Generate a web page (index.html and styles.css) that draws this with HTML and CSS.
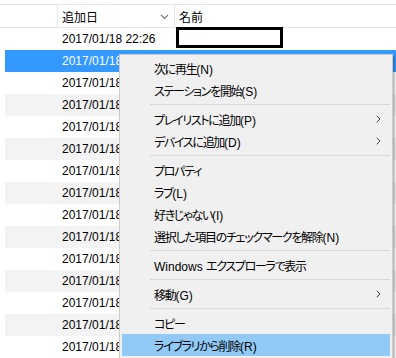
FILE: index.html
```html
<!DOCTYPE html>
<html lang="ja">
<head>
<meta charset="utf-8">
<link rel="stylesheet" href="styles.css">
</head>
<body>
<div class="page">
  <div class="list">
    <div class="header">
      <div class="hcell hgap"></div>
      <div class="hcell hdate">
        <span>追加日</span>
        <svg class="sort" width="9" height="6" viewBox="0 0 9 6"><path d="M1 1 L4.5 4.5 L8 1" fill="none" stroke="#777" stroke-width="1.1"/></svg>
      </div>
      <div class="hcell hname">名前</div>
    </div>
    <div class="row"><div class="date">2017/01/18 22:26</div><div class="name"><div class="redact"></div></div></div>
    <div class="row sel"><div class="date">2017/01/18 22:26</div><div class="name"></div></div>
    <div class="row"><div class="date">2017/01/18 22:26</div><div class="name"></div></div>
    <div class="row alt"><div class="date">2017/01/18 22:26</div><div class="name"></div></div>
    <div class="row"><div class="date">2017/01/18 22:26</div><div class="name"></div></div>
    <div class="row alt"><div class="date">2017/01/18 22:26</div><div class="name"></div></div>
    <div class="row"><div class="date">2017/01/18 22:26</div><div class="name"></div></div>
    <div class="row alt"><div class="date">2017/01/18 22:26</div><div class="name"></div></div>
    <div class="row"><div class="date">2017/01/18 22:26</div><div class="name"></div></div>
    <div class="row alt"><div class="date">2017/01/18 22:26</div><div class="name"></div></div>
    <div class="row"><div class="date">2017/01/18 22:26</div><div class="name"></div></div>
    <div class="row alt"><div class="date">2017/01/18 22:26</div><div class="name"></div></div>
    <div class="row"><div class="date">2017/01/18 22:26</div><div class="name"></div></div>
    <div class="row alt"><div class="date">2017/01/18 22:26</div><div class="name"></div></div>
    <div class="row"><div class="date">2017/01/18 22:26</div><div class="name"></div></div>
  </div>

  <div class="menu">
    <div class="item"><span class="label">次に再生<span class="acc">(N)</span></span></div>
    <div class="item"><span class="label">ステーションを開始<span class="acc">(S)</span></span></div>
    <div class="sep"></div>
    <div class="item"><span class="label">プレイリストに追加<span class="acc">(P)</span></span><svg class="chev" width="5" height="8" viewBox="0 0 5 8"><path d="M0.7 0.7 L4 4 L0.7 7.3" fill="none" stroke="#444" stroke-width="1"/></svg></div>
    <div class="item"><span class="label">デバイスに追加<span class="acc">(D)</span></span><svg class="chev" width="5" height="8" viewBox="0 0 5 8"><path d="M0.7 0.7 L4 4 L0.7 7.3" fill="none" stroke="#444" stroke-width="1"/></svg></div>
    <div class="sep"></div>
    <div class="item"><span class="label">プロパティ</span></div>
    <div class="item"><span class="label">ラブ<span class="acc">(L)</span></span></div>
    <div class="item"><span class="label">好きじゃない<span class="acc">(I)</span></span></div>
    <div class="item"><span class="label">選択した項目のチェックマークを解除<span class="acc">(N)</span></span></div>
    <div class="sep"></div>
    <div class="item"><span class="label"><span class="acc">Windows </span>エクスプローラで表示</span></div>
    <div class="sep"></div>
    <div class="item"><span class="label">移動<span class="acc">(G)</span></span><svg class="chev" width="5" height="8" viewBox="0 0 5 8"><path d="M0.7 0.7 L4 4 L0.7 7.3" fill="none" stroke="#444" stroke-width="1"/></svg></div>
    <div class="sep"></div>
    <div class="item"><span class="label">コピー</span></div>
    <div class="item hot"><span class="label">ライブラリから削除<span class="acc">(R)</span></span></div>
  </div>
</div>
</body>
</html>
```
FILE: styles.css
```css
html, body {
  margin: 0;
  padding: 0;
  background: #fff;
}
body {
  font-family: "Liberation Sans", "Noto Sans CJK JP", sans-serif;
  font-size: 12px;
  color: #000;
  font-feature-settings: "palt" 1;
}
.page {
  position: relative;
  width: 396px;
  height: 358px;
  overflow: hidden;
}
.list {
  padding-top: 4px;
}
.header {
  display: flex;
  height: 22px;
  border-top: 1px solid #e5e5e5;
  border-bottom: 1px solid #e5e5e5;
}
.hcell {
  display: flex;
  align-items: center;
  height: 22px;
}
.hgap {
  width: 57px;
  border-right: 1px solid #e5e5e5;
}
.hdate {
  width: 107px;
  padding-left: 4px;
  padding-right: 5px;
  border-right: 1px solid #e5e5e5;
  justify-content: space-between;
}
.sort {
  margin-top: 1px;
}
.hname {
  padding-left: 4px;
  flex: 1;
}
.row {
  display: flex;
  height: 22px;
  margin-left: 5px;
  line-height: 22px;
}
.row.alt {
  background: #f3f3f3;
}
.row.sel {
  background: #3399ff;
  color: #fff;
}
.date {
  width: 113px;
  padding-left: 57px;
  white-space: nowrap;
  overflow: hidden;
}
.name {
  flex: 1;
  position: relative;
}
.redact {
  width: 101px;
  height: 15px;
  margin-left: 1px;
  margin-top: -1px;
  border: 3px solid #000;
  background: #fff;
}
.menu {
  position: absolute;
  left: 119px;
  top: 54px;
  width: 268px;
  padding: 2px;
  background: #f0f0f0;
  border: 1px solid #cccccc;
  box-shadow: 2px 2px 2px rgba(0, 0, 0, 0.28);
}
.item {
  display: flex;
  align-items: center;
  justify-content: space-between;
  height: 22px;
  padding-left: 32px;
  padding-right: 9px;
  white-space: nowrap;
}
.label {
  letter-spacing: -1.3px;
}
.acc {
  letter-spacing: 0;
}
.item.hot {
  background: #91c9f7;
}
.sep {
  height: 1px;
  margin: 3px 0 3px 28px;
  background: #d7d7d7;
}
```
